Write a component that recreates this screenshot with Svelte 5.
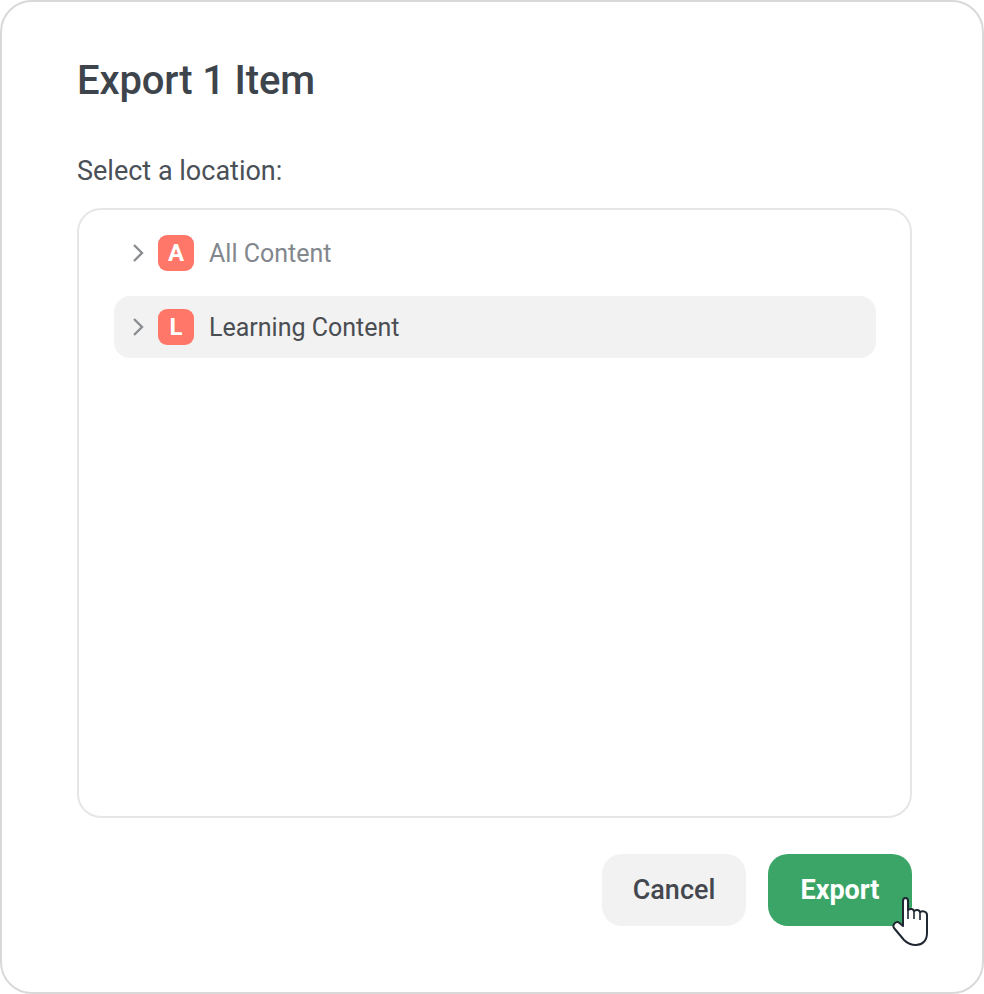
<script>
  const locations = [
    { letter: 'A', name: 'All Content', selected: false },
    { letter: 'L', name: 'Learning Content', selected: true }
  ];
</script>

<div class="dialog">
  <h2>Export 1 Item</h2>
  <p class="label">Select a location:</p>

  <div class="tree">
    {#each locations as item}
      <div class="row" class:selected={item.selected}>
        <svg class="chevron" width="12" height="20" viewBox="0 0 12 20" fill="none">
          <path d="M2 2l8 8-8 8" stroke="#8a8d91" stroke-width="2.400" />
        </svg>
        <span class="badge">{item.letter}</span>
        <span class="name">{item.name}</span>
      </div>
    {/each}
  </div>

  <div class="actions">
    <button class="cancel">Cancel</button>
    <div class="export-wrap">
      <button class="export">Export</button>
      <svg class="cursor" width="37" height="50" viewBox="0 0 37 50">
        <path
          d="M11 4C11 0 16 0 16 4V13C19 11 21 12 22 14C25 12 27 13 28 15C31 13.500 35 14.500 35 18V36C35 44 30 48 24 48C18 48 15 46 12 43L2 31C0 28 4 23 7.500 26L11 29Z"
          fill="#fff"
          stroke="#1f2733"
          stroke-width="2"
          stroke-linejoin="round"
        />
        <path d="M16 13v9M22 14v8M28 15v8" stroke="#1f2733" stroke-width="1.600" fill="none" />
      </svg>
    </div>
  </div>
</div>

<style>
  :global(body) {
    background: #fff;
    font-family: Roboto, sans-serif;
  }

  .dialog {
    box-sizing: border-box;
    width: 984px;
    height: 994px;
    padding: 59px 70px 66px 75px;
    display: flex;
    flex-direction: column;
    border: 2px solid #d9d9d9;
    border-radius: 32px;
    color: #3e444c;
  }

  h2 {
    margin: 0;
    font-size: 40px;
    line-height: 40px;
    font-weight: 500;
    letter-spacing: -0.15px;
  }

  .label {
    margin: 54px 0 21px;
    font-size: 27px;
    line-height: 32px;
    color: #4a5058;
  }

  .tree {
    flex: 1;
    box-sizing: border-box;
    padding: 12px 34px 12px 35px;
    border: 2px solid #e6e6e6;
    border-radius: 24px;
    display: flex;
    flex-direction: column;
    gap: 12px;
  }

  .row {
    height: 62px;
    display: flex;
    align-items: center;
    padding-left: 18px;
    border-radius: 16px;
    color: #82878d;
    font-size: 25px;
  }

  .row.selected {
    background: #f2f2f2;
    color: #4a4d52;
  }

  .chevron {
    margin-right: 14px;
  }

  .badge {
    width: 36px;
    height: 36px;
    margin-right: 15px;
    border-radius: 9px;
    background: #ff7768;
    color: #fff;
    font-size: 24px;
    font-weight: 700;
    display: flex;
    align-items: center;
    justify-content: center;
  }

  .actions {
    margin-top: 36px;
    display: flex;
    justify-content: flex-end;
    gap: 22px;
  }

  button {
    width: 144px;
    height: 72px;
    border: 0;
    border-radius: 20px;
    font-family: inherit;
    font-size: 27px;
    font-weight: 500;
  }

  .cancel {
    background: #f2f2f2;
    color: #44484e;
  }

  .export-wrap {
    position: relative;
  }

  .export {
    display: block;
    background: #3aa566;
    color: #fff;
    font-weight: 700;
  }

  .cursor {
    position: absolute;
    left: 124px;
    top: 43px;
  }
</style>
